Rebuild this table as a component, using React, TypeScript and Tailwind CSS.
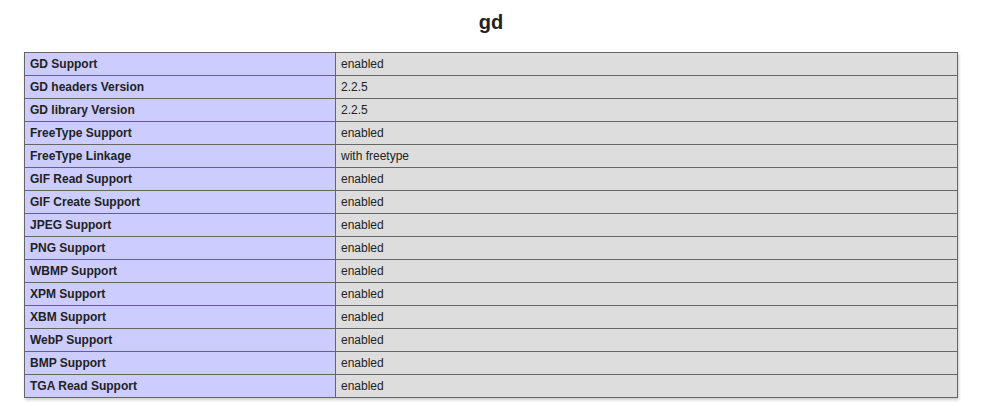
const rows: [string, string][] = [
  ["GD Support", "enabled"],
  ["GD headers Version", "2.2.5"],
  ["GD library Version", "2.2.5"],
  ["FreeType Support", "enabled"],
  ["FreeType Linkage", "with freetype"],
  ["GIF Read Support", "enabled"],
  ["GIF Create Support", "enabled"],
  ["JPEG Support", "enabled"],
  ["PNG Support", "enabled"],
  ["WBMP Support", "enabled"],
  ["XPM Support", "enabled"],
  ["XBM Support", "enabled"],
  ["WebP Support", "enabled"],
  ["BMP Support", "enabled"],
  ["TGA Read Support", "enabled"],
];

export default function App() {
  return (
    <div className="min-h-[406px] bg-white text-[#222] font-['Liberation_Sans',Arial,sans-serif]">
      <div className="w-[982px] text-center">
        <h2 className="pt-[11px] mb-[18px] text-[20px] leading-[23px] font-bold">gd</h2>
        <table className="mx-auto w-[934px] border-collapse border border-[#666] text-left text-[12px] leading-[14px] shadow-[1px_2px_3px_#ccc]">
          <tbody>
            {rows.map(([k, v]) => (
              <tr key={k}>
                <td className="w-[311px] border border-[#666] bg-[#ccf] px-[5px] py-[4px] font-bold align-baseline">
                  {k}
                </td>
                <td className="border border-[#666] bg-[#ddd] px-[5px] py-[4px] align-baseline">{v}</td>
              </tr>
            ))}
          </tbody>
        </table>
      </div>
    </div>
  );
}
